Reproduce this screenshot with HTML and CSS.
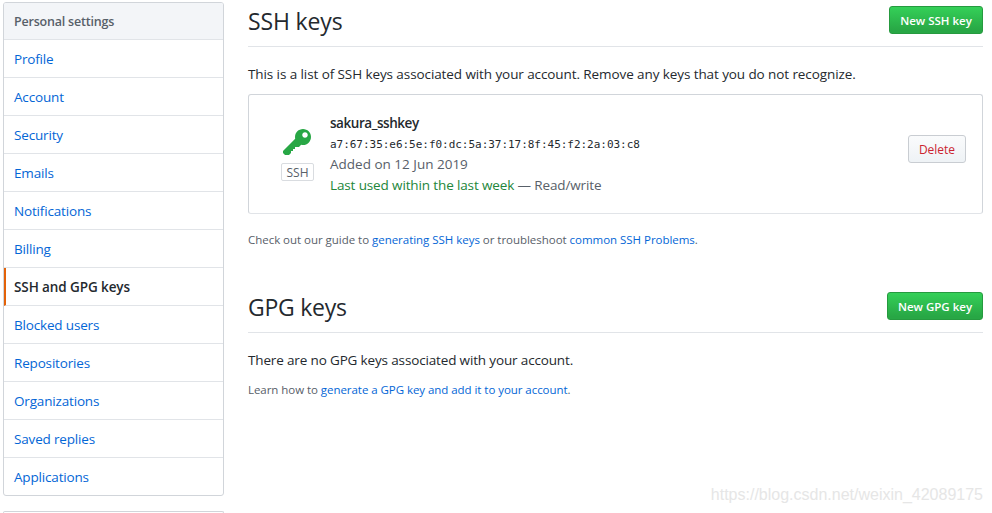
FILE: index.html
```
<!DOCTYPE html>
<html lang="en">
<head>
    <meta charset="UTF-8">
    <title>SSH and GPG keys</title>
    <link rel="stylesheet" href="styles.css">
</head>
<body>
    <div class="container">
        <!-- Sidebar -->
        <aside class="sidebar">
            <nav class="menu">
                <h3 class="menu-heading">Personal settings</h3>
                <a class="menu-item" href="#">Profile</a>
                <a class="menu-item" href="#">Account</a>
                <a class="menu-item" href="#">Security</a>
                <a class="menu-item" href="#">Emails</a>
                <a class="menu-item" href="#">Notifications</a>
                <a class="menu-item" href="#">Billing</a>
                <a class="menu-item selected" href="#">SSH and GPG keys</a>
                <a class="menu-item" href="#">Blocked users</a>
                <a class="menu-item" href="#">Repositories</a>
                <a class="menu-item" href="#">Organizations</a>
                <a class="menu-item" href="#">Saved replies</a>
                <a class="menu-item" href="#">Applications</a>
            </nav>
            <nav class="menu menu-next"></nav>
        </aside>

        <!-- Main Content -->
        <main class="content">
            <section class="ssh">
                <div class="subhead">
                    <h2>SSH keys</h2>
                    <a class="btn btn-primary" href="#">New SSH key</a>
                </div>
                <p class="intro">This is a list of SSH keys associated with your account. Remove any keys that you do not recognize.</p>
                <div class="key-box">
                    <div class="key-type">
                        <svg class="key-icon" viewBox="0 0 14 16" width="28" height="32" aria-hidden="true">
                            <path fill-rule="evenodd" d="M12.83 2.17C12.08 1.42 11.14 1.03 10 1c-1.13.03-2.08.42-2.83 1.17S6.04 3.86 6.01 5c0 .3.03.59.09.89L0 12v1l1 1h2l1-1v-1h1v-1h1v-1h2l1.09-1.11c.3.08.59.11.91.11 1.14-.03 2.08-.42 2.83-1.17S13.97 6.14 14 5c-.03-1.14-.42-2.08-1.17-2.83zM11 5.38c-.77 0-1.38-.61-1.38-1.38 0-.77.61-1.38 1.38-1.38.77 0 1.38.61 1.38 1.38 0 .77-.61 1.38-1.38 1.38z"/>
                        </svg>
                        <span class="key-label">SSH</span>
                    </div>
                    <div class="key-details">
                        <strong class="key-name">sakura_sshkey</strong>
                        <code>a7:67:35:e6:5e:f0:dc:5a:37:17:8f:45:f2:2a:03:c8</code>
                        <span class="key-added">Added on 12 Jun 2019</span>
                        <span class="key-used"><span class="recent">Last used within the last week</span> — Read/write</span>
                    </div>
                    <button class="btn btn-danger">Delete</button>
                </div>
                <p class="note">Check out our guide to <a href="#">generating SSH keys</a> or troubleshoot <a href="#">common SSH Problems</a>.</p>
            </section>

            <section class="gpg">
                <div class="subhead">
                    <h2>GPG keys</h2>
                    <a class="btn btn-primary btn-gpg" href="#">New GPG key</a>
                </div>
                <p class="intro">There are no GPG keys associated with your account.</p>
                <p class="note">Learn how to <a href="#">generate a GPG key and add it to your account</a>.</p>
            </section>
        </main>
    </div>
    <div class="watermark">https://blog.csdn.net/weixin_42089175</div>
</body>
</html>
```
FILE: styles.css
```
/* General Styles */
* {
    box-sizing: border-box;
}
body {
    font-family: 'Open Sans', 'Noto Sans', sans-serif;
    font-size: 13.5px;
    line-height: 21px;
    color: #24292e;
    background-color: #ffffff;
    margin: 0;
}
a {
    color: #0366d6;
    text-decoration: none;
}
h2, h3, p {
    margin: 0;
}
.container {
    display: flex;
    gap: 24px;
    padding: 2px 9px 0 3px;
}
/* Sidebar Styles */
.sidebar {
    width: 221px;
    flex-shrink: 0;
}
.menu {
    border: 1px solid #d1d5da;
    border-radius: 3px;
    margin-bottom: 15px;
    overflow: hidden;
}
.menu-next {
    height: 2px;
    margin-bottom: 0;
    border-bottom: none;
    border-radius: 3px 3px 0 0;
}
.menu-heading {
    font-size: 12.5px;
    font-weight: 600;
    line-height: 20px;
    letter-spacing: -0.2px;
    color: #586069;
    background-color: #f3f5f8;
    border-bottom: 1px solid #e1e4e8;
    padding: 9px 10px 0;
    height: 37px;
}
.menu-item {
    display: block;
    height: 38px;
    padding: 9px 10px 0;
    letter-spacing: -0.17px;
    border-bottom: 1px solid #e1e4e8;
}
.menu-item:last-child {
    height: 37px;
    border-bottom: none;
}
.menu-item.selected {
    color: #24292e;
    font-weight: 600;
    letter-spacing: -0.1px;
    border-left: 2px solid #e36209;
    padding-left: 8px;
}
/* Content Styles */
.content {
    flex: 1;
}
.subhead {
    display: flex;
    justify-content: space-between;
    align-items: flex-start;
    height: 45px;
    padding-top: 4px;
    border-bottom: 1px solid #e1e4e8;
}
.subhead h2 {
    font-size: 23px;
    font-weight: 400;
    line-height: 31px;
    letter-spacing: -0.15px;
}
.gpg h2 {
    letter-spacing: -0.25px;
}
.intro {
    margin-top: 17px;
    letter-spacing: -0.09px;
}
.note {
    font-size: 11.5px;
    line-height: 18px;
    letter-spacing: -0.03px;
    color: #586069;
}
.ssh .note {
    margin-top: 17px;
}
.gpg {
    margin-top: 39px;
}
.gpg .intro {
    letter-spacing: -0.15px;
}
.gpg .note {
    margin-top: 10px;
    letter-spacing: -0.05px;
}
/* Buttons */
.btn {
    font-family: inherit;
    font-size: 12px;
    font-weight: 600;
    line-height: 20px;
    height: 28px;
    padding: 3px 0;
    text-align: center;
    border: 1px solid #c9cdd2;
    border-radius: 3px;
}
.btn-primary {
    width: 94px;
    padding-top: 4px;
    font-size: 11.5px;
    color: #ffffff;
    border-color: #269a3f;
    background: linear-gradient(#34d058, #28a745 90%);
}
.btn-gpg {
    width: 96px;
}
.btn-danger {
    width: 58px;
    padding-top: 4px;
    color: #cb2431;
    font-weight: 500;
    background: linear-gradient(#fafbfc, #eff3f6 90%);
}
/* Key Box */
.key-box {
    display: flex;
    height: 120px;
    margin-top: 9px;
    padding: 17px 16px 0 32px;
    border: 1px solid #d1d5da;
    border-bottom-color: #e1e4e8;
    border-radius: 3px;
}
.key-type {
    display: flex;
    flex-direction: column;
    align-items: center;
    width: 33px;
    padding-top: 15px;
}
.key-icon {
    margin-right: 1px;
    fill: #28a745;
}
.key-label {
    width: 33px;
    height: 18px;
    margin-top: 4px;
    font-size: 12px;
    line-height: 17px;
    text-align: center;
    color: #586069;
    border: 1px solid #d9dce0;
    border-radius: 2px;
}
.key-details {
    display: flex;
    flex-direction: column;
    flex: 1;
    margin-left: 16px;
    color: #586069;
}
.key-name {
    height: 22px;
    line-height: 22px;
    font-weight: 600;
    letter-spacing: -0.45px;
    color: #24292e;
}
.key-details code {
    height: 20px;
    font-family: 'DejaVu Sans Mono', monospace;
    font-size: 11px;
    letter-spacing: -0.03px;
    color: #24292e;
}
.key-used {
    letter-spacing: -0.13px;
}
.recent {
    color: #22863a;
}
.key-box .btn {
    margin-top: 23px;
}
/* Watermark */
.watermark {
    position: absolute;
    right: 9px;
    bottom: 8px;
    font-family: 'Liberation Sans', sans-serif;
    font-size: 16px;
    line-height: 20px;
    color: #e6e6e6;
}
```
